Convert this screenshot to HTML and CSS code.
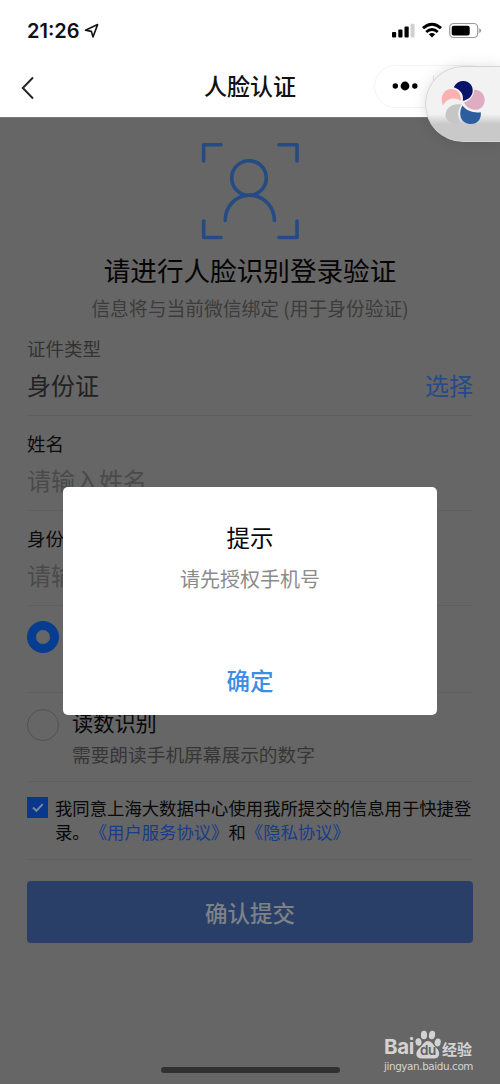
FILE: index.html
```html
<!DOCTYPE html>
<html lang="zh-CN">
<head>
<meta charset="utf-8">
<title>人脸认证</title>
<link rel="stylesheet" href="styles.css">
</head>
<body>
<div class="screen">
  <header class="top">
    <div class="status">
      <div class="status-time"><span>21:26</span>
        <svg class="loc" width="16" height="16" viewBox="0 0 16 16"><path d="M1.5 7.2 13.6 1.6 9 14 7.4 8.4Z" fill="none" stroke="#111" stroke-width="1.6" stroke-linejoin="round"/></svg>
      </div>
      <svg class="status-icons" width="92" height="18" viewBox="0 0 92 18">
        <g fill="#000"><rect x="2" y="10" width="4.2" height="5.5" rx="1"/><rect x="8.3" y="7.5" width="4.2" height="8" rx="1"/><rect x="14.5" y="4.5" width="4.2" height="11" rx="1"/></g>
        <rect x="20.6" y="1.7" width="4" height="13.8" rx="1" fill="#d0d0d0"/>
        <g fill="none" stroke="#000" stroke-width="2.9"><path d="M33 6.2Q42-1.8 51 6.2"/><path d="M36.2 10Q42 4.9 47.8 10"/></g>
        <path d="M38.8 12.2Q42 9.7 45.2 12.2L42 15.6Z" fill="#000"/>
        <rect x="59.7" y="1.5" width="28" height="14" rx="4" fill="none" stroke="#999" stroke-width="1.2"/>
        <rect x="61.7" y="3.8" width="18" height="9.6" rx="2" fill="#000"/>
        <path d="M89.2 6.2q2 .7 2 2.4t-2 2.4z" fill="#999"/>
      </svg>
    </div>
    <div class="nav">
      <svg class="back" width="14" height="24" viewBox="0 0 14 24"><path d="M12 1.5 1.8 12 12 22.5" fill="none" stroke="#222" stroke-width="1.9"/></svg>
      <h1 class="nav-title">人脸认证</h1>
      <div class="capsule">
        <svg width="28" height="10" viewBox="0 0 28 10"><circle cx="4.3" cy="5" r="2.7"/><circle cx="14" cy="5" r="4.4"/><circle cx="23.8" cy="5" r="2.7"/></svg>
        <span class="capsule-line"></span>
      </div>
    </div>
  </header>

  <main class="body">
    <section class="hero">
      <svg width="98" height="98" viewBox="0 0 98 98" fill="none" stroke="#244b83" stroke-width="3.6" stroke-linecap="round" stroke-linejoin="round">
        <path d="M2.7 19V2.7H20M78 2.7H96V19M2.7 79V95.5H20M78 95.5H96V79"/>
        <circle cx="48" cy="36" r="17.3"/><path d="M24.2 78.5C24.2 64 35 53.3 48.5 53.3S73.4 64 73.4 78.5"/>
      </svg>
      <h2 class="hero-title">请进行人脸识别登录验证</h2>
      <p class="hero-sub">信息将与当前微信绑定 (用于身份验证)</p>
    </section>

    <section class="field">
      <label class="label label-muted">证件类型</label>
      <div class="field-row"><span class="value">身份证</span><span class="choose">选择</span></div>
    </section>
    <section class="field field-input">
      <label class="label">姓名</label>
      <div class="field-row"><span class="placeholder">请输入姓名</span></div>
    </section>
    <section class="field field-input">
      <label class="label">身份证</label>
      <div class="field-row"><span class="placeholder">请输入</span></div>
    </section>

    <section class="option option-first"><span class="radio radio-on"></span></section>
    <section class="option">
      <span class="radio"></span>
      <div class="option-text"><span class="option-title">读数识别</span><span class="option-sub">需要朗读手机屏幕展示的数字</span></div>
    </section>

    <section class="agree">
      <span class="check"><svg width="21" height="21" viewBox="0 0 21 21"><path d="M6 10.5 9.4 13.8 15.7 7.2" fill="none" stroke="#7c87a0" stroke-width="1.9"/></svg></span>
      <p class="agree-text">我同意上海大数据中心使用我所提交的信息用于快捷登<br>录。<a>《用户服务协议》</a>和<a>《隐私协议》</a></p>
    </section>

    <div class="submit">确认提交</div>
  </main>

  <div class="home"></div>

  <div class="modal">
    <div class="modal-title">提示</div>
    <div class="modal-text">请先授权手机号</div>
    <div class="modal-ok">确定</div>
  </div>

  <div class="float">
    <svg width="46" height="46" viewBox="0 0 46 46">
      <path d="M4.5 34.5C4.5 26 12 22 20.5 23.5C16.5 29 16 36 20 42.5C11 44 5 40 4.5 34.5Z" fill="#c6c6c6"/>
      <path d="M2 24.5C-1.5 17 2 8.5 10 8C16.5 8 20.5 13 19.8 20C13 15.5 6 17.5 2 24.5Z" fill="#fbb0b1"/>
      <path d="M33 8.5C41 9 44.5 15 43.6 20.5C42.5 26.5 38 29.5 33 28.7C28 28 25 25 23 21.5C29 19.5 33 15 33 8.5Z" fill="#dfacc2"/>
      <path d="M12.8 6.3C15 1.5 19 0 22.5 0C29 .3 32.5 5.5 31.6 11C30.5 16.5 26.5 19 21.8 19.8C23 13 19 8.5 12.8 6.3Z" fill="#06146b"/>
      <path d="M21.5 24.5C26 30.5 33 32 39.8 31.2C40.5 38 36.5 43 30 43C20 43 16.5 33 21.5 24.5Z" fill="#2c5e9f"/>
    </svg>
  </div>

  <div class="watermark">
    <div class="wm-brand">
      <span class="wm-bai">Bai</span>
      <span class="wm-paw">
        <svg width="26" height="29" viewBox="0 0 26 29" fill="#d3d3d3"><ellipse cx="3.5" cy="12" rx="3" ry="3.8" transform="rotate(-12 3.5 12)"/><ellipse cx="9" cy="5" rx="3.1" ry="4.3"/><ellipse cx="17" cy="5" rx="3.1" ry="4.3" transform="rotate(10 17 5)"/><ellipse cx="22.7" cy="12.4" rx="3" ry="4" transform="rotate(15 22.7 12.4)"/><path d="M13 11C17 11 18 15 21 17.5C26 22 25 28.5 19 28.5H7C0 28.5 0 22 4.5 18C8 15 9 11 13 11Z"/></svg>
        <span class="wm-du">du</span>
      </span>
      <span class="wm-cn">经验</span>
    </div>
    <div class="wm-url">jingyan.baidu.com</div>
  </div>
</div>
</body>
</html>
```
FILE: styles.css
```css
* { box-sizing: border-box; margin: 0; padding: 0; }
body {
  font-family: "Noto Sans CJK SC", "Noto Sans", sans-serif;
  background: #666;
}
.screen {
  position: relative;
  width: 500px;
  height: 1084px;
  overflow: hidden;
  display: flex;
  flex-direction: column;
  background: #666;
}
svg { display: block; flex: none; }

.top { height: 118px; flex: none; background: #fff; border-bottom: 1px solid #777; }
.status {
  height: 55px;
  padding: 7px 18px 0 27px;
  display: flex;
  align-items: center;
  justify-content: space-between;
}
.status-time {
  display: flex;
  align-items: center;
  gap: 4px;
  font: 600 20px/24px Inter, sans-serif;
  letter-spacing: 0;
  color: #111;
}
.nav {
  height: 62px;
  padding-left: 21px;
  display: grid;
  grid-template-columns: 127px 205px 1fr;
  align-items: center;
}
.back { margin-top: 3px; }
.nav-title {
  padding-left: 56px;
  margin-top: -2px;
  font-size: 23px;
  line-height: 34px;
  font-weight: 500;
  color: #111;
  white-space: nowrap;
}
.capsule {
  margin-left: 21px;
  width: 118px;
  height: 43px;
  padding-left: 16px;
  border: 1px solid #f3f3f3;
  border-radius: 22px;
  display: flex;
  align-items: center;
  gap: 14px;
}
.capsule-line { width: 1px; height: 22px; background: #e8e8e8; }

.body { flex: 1; padding: 0 27px; }
.hero {
  padding-top: 24px;
  display: flex;
  flex-direction: column;
  align-items: center;
}
.hero-title { margin-top: 10px; font-size: 26.6px; line-height: 40px; font-weight: 400; color: #050505; }
.hero-sub { margin-top: 4px; font-size: 18.8px; line-height: 28px; color: #3c3c3c; white-space: nowrap; }

.field { height: 94px; padding-top: 12px; border-bottom: 1px solid #5f5f5f; }
.field-input { height: 95px; padding-top: 13px; }
.label { display: block; font-size: 18.5px; line-height: 28px; color: #0c0c0c; }
.label-muted { color: #333; }
.field-row { height: 45px; display: flex; align-items: center; justify-content: space-between; font-size: 24px; line-height: 36px; }
.value { color: #222; }
.choose { color: #244a88; }
.placeholder { color: #4a4a4a; }

.option { height: 89px; padding-top: 16px; border-bottom: 1px solid #5f5f5f; display: flex; gap: 13px; }
.option-first { height: 87px; padding-top: 15px; }
.radio { flex: none; width: 32px; height: 32px; border: 1.5px solid #525252; border-radius: 50%; }
.radio-on { border: 9.5px solid #073d91; background: #666; }
.option-text { display: flex; flex-direction: column; gap: 3px; margin-top: -2px; }
.option-title { font-size: 21.2px; line-height: 30px; color: #080808; }
.option-sub { font-size: 18.7px; line-height: 28px; color: #363636; }

.agree { height: 78px; padding-top: 15px; border-bottom: 1px solid #5f5f5f; display: flex; gap: 7px; }
.check { flex: none; width: 21px; height: 21px; background: #08388c; }
.agree-text { margin-top: -1px; font-size: 17.35px; line-height: 24px; color: #080808; white-space: nowrap; text-spacing-trim: space-all; }
.agree-text a { color: #173d88; }

.submit {
  margin-top: 21px;
  height: 62px;
  border-radius: 4px;
  background: #293f68;
  color: #7e8288;
  font-size: 22.5px;
  font-weight: 500;
  line-height: 63px;
  text-align: center;
}
.home { flex: none; align-self: center; width: 179px; height: 6px; margin-bottom: 11px; border-radius: 3px; background: #303030; }

.modal {
  position: absolute;
  left: 63px;
  top: 487px;
  width: 374px;
  height: 228px;
  padding-top: 32px;
  border-radius: 5px;
  background: #fff;
  text-align: center;
}
.modal-title { font-size: 23.5px; line-height: 36px; color: #080808; }
.modal-text { margin-top: 9px; font-size: 20px; line-height: 30px; color: #8b8b8b; }
.modal-ok { margin-top: 68px; font-size: 23.5px; line-height: 36px; font-weight: 500; color: #3d8ce5; }

.float {
  position: absolute;
  left: 425px;
  top: 66px;
  width: 76px;
  height: 76px;
  padding: 14px 0 0 15px;
  border: 1.5px solid #d5d5d5;
  border-right: 0;
  border-radius: 38px 0 0 38px;
  background: linear-gradient(#f2f2f2 0 47px, #c9c9c9 57px);
  box-shadow: 0 0 14px rgba(0, 0, 0, .12);
}

.watermark { position: absolute; left: 384px; top: 1029px; color: #d3d3d3; }
.wm-brand { display: flex; align-items: flex-end; height: 30px; }
.wm-bai { width: 31px; font: 700 20.5px/24px Inter, sans-serif; height: 24px; letter-spacing: -.4px; }
.wm-paw { position: relative; width: 26px; }
.wm-du { position: absolute; left: 5px; top: 13px; font: 600 13.5px/15px Inter, sans-serif; letter-spacing: -.5px; color: #606060; }
.wm-cn { margin-left: 1px; font-size: 15px; line-height: 24px; height: 22px; font-weight: 700; }
.wm-url { font: 10.4px/14px "DejaVu Sans", sans-serif; margin-top: 0; letter-spacing: -.4px; }
```
